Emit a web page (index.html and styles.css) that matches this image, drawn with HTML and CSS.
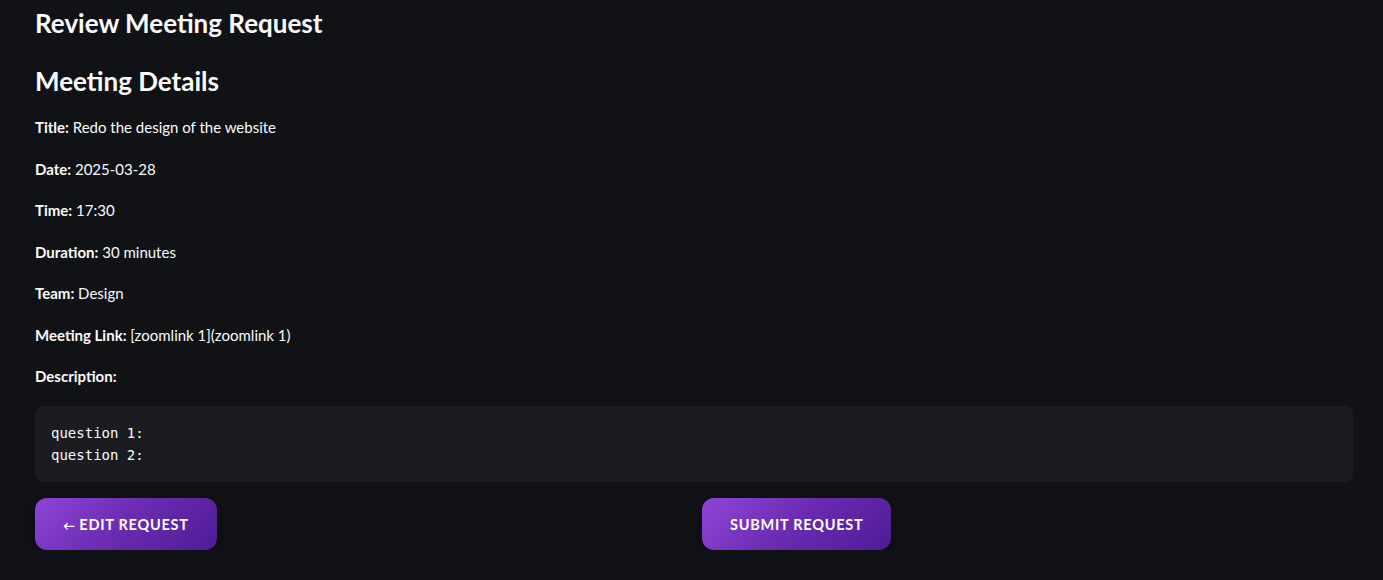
FILE: index.html
```html
<!DOCTYPE html>
<html>
<head>
<meta charset="utf-8">
<link rel="stylesheet" href="styles.css">
</head>
<body>
<main class="page">
  <h2 class="title">Review Meeting Request</h2>
  <h3 class="subtitle">Meeting Details</h3>
  <p class="row first"><b>Title:</b> Redo the design of the website</p>
  <p class="row"><b>Date:</b> 2025-03-28</p>
  <p class="row"><b>Time:</b> 17:30</p>
  <p class="row"><b>Duration:</b> 30 minutes</p>
  <p class="row"><b>Team:</b> Design</p>
  <p class="row"><b>Meeting Link:</b> [zoomlink 1](zoomlink 1)</p>
  <p class="row"><b>Description:</b></p>
  <pre class="code">question 1:
question 2:</pre>
  <div class="actions">
    <div class="col"><button class="btn"><span class="arrow">&larr;</span> EDIT REQUEST</button></div>
    <div class="col"><button class="btn">SUBMIT REQUEST</button></div>
  </div>
</main>
</body>
</html>
```

FILE: styles.css
```css
html, body {
  margin: 0;
  padding: 0;
  background: #111216;
  color: #fafafa;
  font-family: "Lato", "Noto Sans", sans-serif;
}
.page {
  padding: 0 30px 0 35px;
}
.title {
  margin: 0;
  padding-top: 6px;
  font-size: 26px;
  font-weight: 700;
  line-height: 34px;
}
.subtitle {
  margin: 0;
  padding-top: 24px;
  font-size: 26px;
  font-weight: 700;
  line-height: 34px;
}
.row {
  margin: 0;
  font-size: 15px;
  line-height: 20px;
  padding-top: 21.5px;
}
.row.first { padding-top: 19px; }
.row b { font-weight: 700; }
.code {
  margin: 20px 0 0 0;
  background: #1a1c21;
  border-radius: 8px;
  padding: 16px;
  font-family: "DejaVu Sans Mono", monospace;
  font-size: 14px;
  line-height: 22px;
  color: #fafafa;
}
.actions {
  display: grid;
  grid-template-columns: 1fr 1fr;
  gap: 16px;
  margin-top: 16px;
}
.btn {
  height: 52px;
  padding: 0 28px;
  border: none;
  border-radius: 12px;
  background: linear-gradient(135deg, #8f45d9 0%, #6a2bb0 50%, #4f1b96 100%);
  color: #fff;
  font-family: "Lato", "Noto Sans", sans-serif;
  font-size: 14.5px;
  font-weight: 700;
  letter-spacing: 0.75px;
  box-shadow: 0 4px 12px rgba(0,0,0,0.45);
  cursor: pointer;
}
.arrow {
  font-size: 12px;
  letter-spacing: 0;
}
```
